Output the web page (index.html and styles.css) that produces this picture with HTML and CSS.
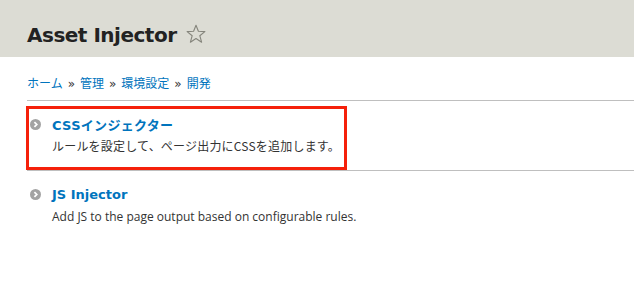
FILE: index.html
```html
<!DOCTYPE html>
<html lang="ja">
<head>
<meta charset="utf-8">
<title>Asset Injector</title>
<link rel="stylesheet" href="styles.css">
</head>
<body>
<header class="page-header">
  <h1 class="page-title">Asset Injector <svg class="star" viewBox="0 0 20 20" width="20" height="20"><path d="M10 1.2 L12.4 7.3 L18.9 7.6 L13.8 11.7 L15.6 18.2 L10 14.5 L4.4 18.2 L6.2 11.7 L1.1 7.6 L7.6 7.3 Z" fill="none" stroke="#85857c" stroke-width="1.1" stroke-linejoin="round"/></svg></h1>
</header>
<nav class="breadcrumb">
  <a href="#">ホーム</a><span class="sep">»</span><a href="#">管理</a><span class="sep">»</span><a href="#">環境設定</a><span class="sep">»</span><a href="#">開発</a>
</nav>
<ul class="admin-list">
  <li class="item">
    <div class="highlight">
      <div class="item-title"><span class="bullet"><svg viewBox="0 0 12 12" width="11" height="11"><circle cx="6" cy="6" r="6" fill="#a3a3a3"/><path d="M4.8 3.3 L7.4 6 L4.8 8.7" fill="none" stroke="#fff" stroke-width="1.9"/></svg></span><a href="#">CSSインジェクター</a></div>
      <div class="item-desc">ルールを設定して、ページ出力にCSSを追加します。</div>
    </div>
  </li>
  <li class="item">
    <div class="plain">
      <div class="item-title"><span class="bullet"><svg viewBox="0 0 12 12" width="11" height="11"><circle cx="6" cy="6" r="6" fill="#a3a3a3"/><path d="M4.8 3.3 L7.4 6 L4.8 8.7" fill="none" stroke="#fff" stroke-width="1.9"/></svg></span><a href="#">JS Injector</a></div>
      <div class="item-desc">Add JS to the page output based on configurable rules.</div>
    </div>
  </li>
</ul>
</body>
</html>
```
FILE: styles.css
```css
html, body {
  margin: 0;
  padding: 0;
  background: #fff;
  font-family: "DejaVu Sans", "Noto Sans CJK JP", sans-serif;
  color: #333;
}
.page-header {
  background: #dcdcd4;
  height: 57px;
  padding-left: 27px;
  display: flex;
  align-items: flex-end;
}
.page-title {
  margin: 0 0 9px 0;
  font-size: 20px;
  letter-spacing: -0.5px;
  font-weight: bold;
  color: #222;
  line-height: 26px;
  display: flex;
  align-items: center;
}
.star {
  margin-left: 9px;
  margin-top: -2px;
}
.breadcrumb {
  padding: 17px 0 0 27px;
  font-size: 12px;
  line-height: 18px;
  font-family: "Noto Sans CJK JP", "DejaVu Sans", sans-serif;
}
.breadcrumb a {
  color: #0074bd;
  text-decoration: none;
}
.breadcrumb .sep {
  color: #333;
  margin: 0 5px;
  font-family: "DejaVu Sans", sans-serif;
  font-size: 12px;
}
.admin-list {
  list-style: none;
  margin: 7px 0 0 27px;
  padding: 0;
}
.item {
  border-top: 1px solid #bfbfbf;
}
.highlight {
  margin: 5px 0 0 -1px;
  width: 315px;
  height: 58px;
  border: 3px solid #f5200a;
}
.plain {
  padding: 13px 0 0 0;
}
.item-title {
  display: flex;
  align-items: center;
  height: 20px;
  font-weight: bold;
  font-size: 13px;
  font-family: "DejaVu Sans", "Noto Sans CJK JP", sans-serif;
}
.highlight .item-title {
  margin-top: 5px;
  margin-left: 1px;
  letter-spacing: 0.3px;
}
.plain .item-title {
  margin-left: 3px;
}
.bullet {
  display: inline-flex;
  width: 11px;
  height: 11px;
  margin-right: 11px;
}
.item-title a {
  color: #0074bd;
  text-decoration: none;
}
.item-desc {
  font-size: 12px;
  line-height: 18px;
  margin-top: 3px;
  color: #333;
}
.highlight .item-desc {
  margin-left: 23px;
  font-family: "Noto Sans CJK JP", sans-serif;
  letter-spacing: 0.2px;
}
.plain .item-desc {
  margin-left: 25px;
  font-family: "Open Sans", "DejaVu Sans", sans-serif;
  margin-top: 4px;
}
```
